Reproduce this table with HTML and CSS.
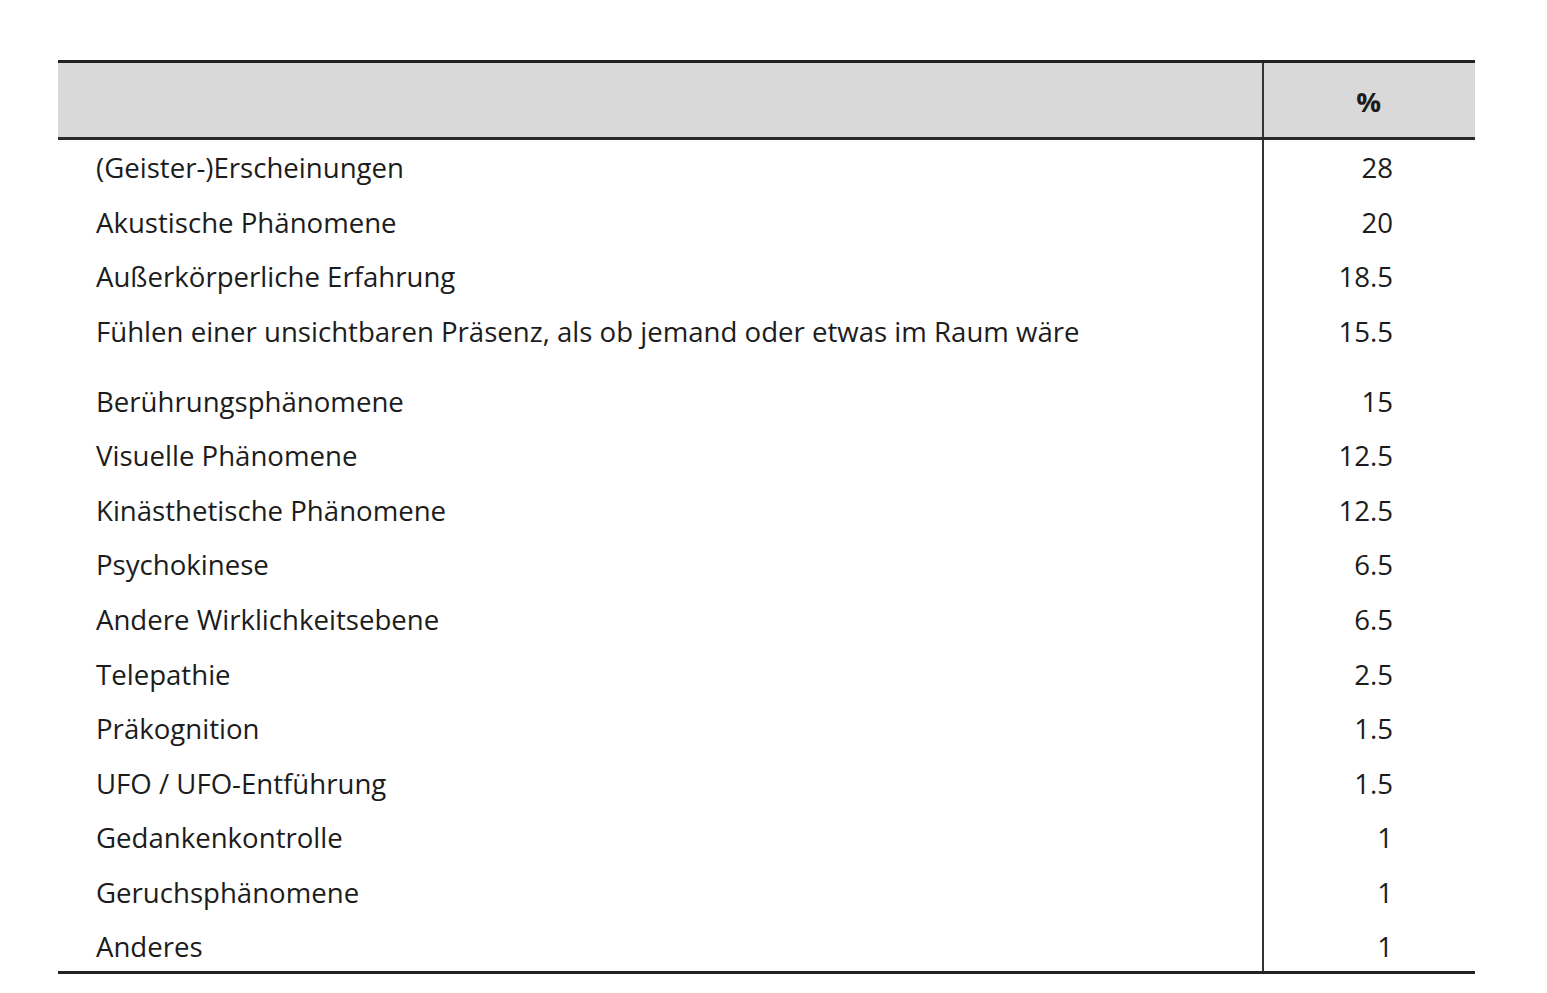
FILE: index.html
```html
<!DOCTYPE html>
<html lang="de">
<head>
<meta charset="utf-8">
<title>Tabelle</title>
<link rel="stylesheet" href="styles.css">
</head>
<body>
<table class="data">
  <thead>
    <tr><th class="label"></th><th class="val">%</th></tr>
  </thead>
  <tbody>
    <tr class="first"><td class="label">(Geister-)Erscheinungen</td><td class="val">28</td></tr>
    <tr><td class="label">Akustische Phänomene</td><td class="val">20</td></tr>
    <tr><td class="label">Außerkörperliche Erfahrung</td><td class="val">18.5</td></tr>
    <tr><td class="label">Fühlen einer unsichtbaren Präsenz, als ob jemand oder etwas im Raum wäre</td><td class="val">15.5</td></tr>
    <tr class="gap"><td class="label">Berührungsphänomene</td><td class="val">15</td></tr>
    <tr><td class="label">Visuelle Phänomene</td><td class="val">12.5</td></tr>
    <tr><td class="label">Kinästhetische Phänomene</td><td class="val">12.5</td></tr>
    <tr><td class="label">Psychokinese</td><td class="val">6.5</td></tr>
    <tr><td class="label">Andere Wirklichkeitsebene</td><td class="val">6.5</td></tr>
    <tr><td class="label">Telepathie</td><td class="val">2.5</td></tr>
    <tr><td class="label">Präkognition</td><td class="val">1.5</td></tr>
    <tr><td class="label">UFO / UFO-Entführung</td><td class="val">1.5</td></tr>
    <tr><td class="label">Gedankenkontrolle</td><td class="val">1</td></tr>
    <tr><td class="label">Geruchsphänomene</td><td class="val">1</td></tr>
    <tr class="last"><td class="label">Anderes</td><td class="val">1</td></tr>
  </tbody>
</table>
</body>
</html>
```
FILE: styles.css
```css
html, body {
  margin: 0;
  padding: 0;
  background: #ffffff;
}
body {
  font-family: "Open Sans", "Liberation Sans", sans-serif;
  color: #1c1c1c;
}
.data {
  margin: 60px 0 0 58px;
  width: 1417px;
  border-collapse: collapse;
  table-layout: fixed;
  font-size: 27.6px;
}
.data th, .data td {
  padding: 0;
  vertical-align: middle;
}
.data thead tr {
  height: 77px;
  background: #d9d9d9;
  border-top: 3px solid #222222;
  border-bottom: 3px solid #2a2a2a;
}
.data th.label {
  width: 1204px;
  border-right: 2px solid #333333;
}
.data th.val {
  font-weight: 700;
  text-align: right;
  padding-right: 94px;
  padding-top: 2px;
}
.data td.label {
  padding-left: 38px;
  border-right: 2px solid #333333;
  white-space: nowrap;
}
.data td.val {
  text-align: right;
  padding-right: 82px;
}
.data tbody tr {
  height: 54.6px;
}
.data tbody tr.first {
  height: 56px;
}
.data tbody tr.gap {
  height: 69.6px;
}
.data tbody tr.gap td {
  padding-top: 15px;
}
.data tbody tr.last {
  height: 53px;
  border-bottom: 3px solid #222222;
}
.data tbody tr.last td {
  padding-top: 3px;
}
```
